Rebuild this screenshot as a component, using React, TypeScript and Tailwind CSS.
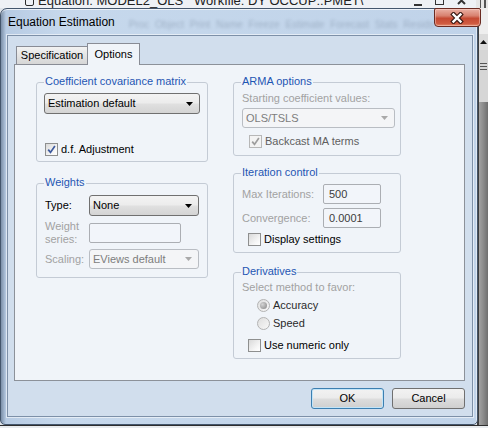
import React from 'react';

type Kids = { children?: React.ReactNode; className?: string };

// Small black/grey drop-down arrow used by the combo boxes
function Arrow({ disabled }: { disabled?: boolean }) {
  return (
    <svg width="7" height="4" viewBox="0 0 7 4" className="ml-auto mr-[6px] shrink-0">
      <path d="M0 0h7L3.5 4z" fill={disabled ? '#a9a9a9' : '#000'} />
    </svg>
  );
}

function Combo({ value, disabled, className = '' }: { value: string; disabled?: boolean; className?: string }) {
  return (
    <div
      className={`flex items-center rounded-[3px] border pl-[3px] ${
        disabled
          ? 'border-[#b9bdc3] bg-[#f4f5f7] text-[#7d7d7d]'
          : 'border-[#707070] bg-[linear-gradient(#f3f3f3,#ececec_48%,#e0e0e0_52%,#d4d4d4)] text-black'
      } ${className}`}
    >
      <span>{value}</span>
      <Arrow disabled={disabled} />
    </div>
  );
}

function Field({ value = '', className = '' }: { value?: string; className?: string }) {
  return (
    <div className={`flex h-[20px] items-center rounded-[2px] border border-[#abaeb3] bg-[#f2f5fa] pl-[5px] text-[#3c3c3c] ${className}`}>
      {value}
    </div>
  );
}

function Check({ label, checked, disabled }: { label: string; checked?: boolean; disabled?: boolean }) {
  return (
    <div className="flex h-[13px] items-center gap-[3px]">
      <span
        className={`flex h-[13px] w-[13px] shrink-0 items-center justify-center border ${
          disabled
            ? 'border-[#b7b7b7] bg-[#f3f3f3]'
            : 'border-[#8e8f8f] bg-[linear-gradient(135deg,#d9d9d9,#f7f7f7_70%,#ffffff)]'
        }`}
      >
        {checked && (
          <svg width="9" height="9" viewBox="0 0 9 9">
            <path
              d="M1.2 4.6l2.3 2.8L7.9 1"
              fill="none"
              stroke={disabled ? '#9d9d9d' : '#3d5a9e'}
              strokeWidth="1.7"
            />
          </svg>
        )}
      </span>
      <span className={disabled ? 'text-[#5f5f5f]' : 'text-black'}>{label}</span>
    </div>
  );
}

function Radio({ label, checked }: { label: string; checked?: boolean }) {
  return (
    <div className="flex h-[13px] items-center gap-[3px]">
      <span className="flex h-[13px] w-[13px] shrink-0 items-center justify-center rounded-full border border-[#b3b3b3] bg-[linear-gradient(135deg,#dedede,#f8f8f8)]">
        {checked && (
          <span className="h-[7px] w-[7px] rounded-full bg-[radial-gradient(circle_at_35%_35%,#d4d4d4,#858585)]" />
        )}
      </span>
      <span className="text-[#2a2a2a]">{label}</span>
    </div>
  );
}

function Group({ title, className = '', children }: Kids & { title: string }) {
  return (
    <div className={`relative rounded-[3px] border border-[#c4cbd5] ${className}`}>
      <span className="absolute -top-[8px] left-[7px] bg-[#f0f4f9] px-[1px] text-[#1f56b3]">{title}</span>
      {children}
    </div>
  );
}

function Label({ children, className = '' }: Kids) {
  return <span className={`text-[#a2a2a2] ${className}`}>{children}</span>;
}

function Button({ children, focused }: Kids & { focused?: boolean }) {
  return (
    <button
      className={`h-[21px] w-[73px] rounded-[3px] border bg-[linear-gradient(#f2f2f2,#ebebeb_48%,#dddddd_52%,#cfcfcf)] text-black ${
        focused ? 'border-[#3c7fb1] shadow-[inset_0_0_0_1px_#c2e4f8]' : 'border-[#707070]'
      }`}
    >
      {children}
    </button>
  );
}

// Window sitting behind the dialog: just its title strip and scrollbar show
function BackWindow() {
  return (
    <div className="flex h-full flex-col">
      <div className="flex h-[8px] items-start overflow-hidden bg-[#eef1f5]">
        <span className="-mt-[5px] ml-[25px] h-[11px] w-[9px] shrink-0 rounded-[2px] border-[1.5px] border-[#2b2b2b]" />
        <span className="-mt-[6px] ml-[4px] whitespace-pre text-[13px] leading-[14px] text-[#222]">
          {'Equation: MODEL2_OLS   Workfile: DY OCCUP::PMET\\'}
        </span>
        <span className="-mt-[4px] ml-auto mr-[10px] flex gap-[13px] text-[#333]">
          <span className="mt-[8px] h-[2px] w-[8px] bg-[#333]" />
          <span className="h-[9px] w-[9px] border border-[#333]" />
          <svg width="9" height="9" viewBox="0 0 9 9">
            <path d="M1 1l7 7M8 1L1 8" stroke="#333" strokeWidth="2" />
          </svg>
        </span>
        <span className="h-full w-[12px] shrink-0 bg-[linear-gradient(to_right,#e6e6e6_30%,#555_30%,#555_45%,#e6e6e6_45%,#e6e6e6_70%,#555_70%,#555_85%,#e6e6e6_85%)]" />
      </div>
      <div className="flex flex-1">
        <div className="flex-1 bg-[#dfe4ea]" />
        <div className="flex w-[11px] flex-col border-l-[2px] border-[#3f3f3f]">
          <div className="h-[26px] bg-[#eeeeee]" />
          <div className="flex h-[16px] items-center justify-center bg-[#dcdcdc]">
            <svg width="7" height="4" viewBox="0 0 7 4">
              <path d="M3.5 0L7 4H0z" fill="#111" />
            </svg>
          </div>
          <div className="flex h-[52px] items-start justify-center bg-[#d6d6d6] pt-[13px]">
            <span className="flex flex-col gap-[2px]">
              <span className="h-px w-[7px] bg-[#555]" />
              <span className="h-px w-[7px] bg-[#555]" />
              <span className="h-px w-[7px] bg-[#555]" />
            </span>
          </div>
          <div className="flex-1 bg-[linear-gradient(to_right,#a2a2a2,#8a8a8a_50%,#6f6f6f)]" />
        </div>
      </div>
      <div className="h-[3px] border-t border-[#2e2e2e] bg-[#e9ecef]" />
    </div>
  );
}

function CloseButton() {
  return (
    <div className="-mt-px mr-[4px] flex h-[19px] w-[47px] shrink-0 items-center justify-center rounded-b-[4px] rounded-t-[2px] border border-[#6a2b22] bg-[linear-gradient(#eab0a4,#d8816f_40%,#c54a33_55%,#cf5a40_85%,#e28a6c)] shadow-[inset_0_0_0_1px_rgba(255,220,210,0.45)]">
      <svg width="14" height="12" viewBox="0 0 14 12">
        <path d="M3.5 2.5l7 7M10.5 2.5l-7 7" stroke="#3b1a14" strokeWidth="4.6" strokeLinecap="square" />
        <path d="M3.5 2.5l7 7M10.5 2.5l-7 7" stroke="#ffffff" strokeWidth="2.4" strokeLinecap="square" />
      </svg>
    </div>
  );
}

function OptionsPage() {
  return (
    <div className="flex h-[317px] w-[451px] gap-[25px] border border-[#8c9199] bg-[#f0f4f9] pl-[21px] pt-[17px]">
      {/* left column */}
      <div className="flex w-[172px] flex-col">
        <Group title="Coefficient covariance matrix" className="h-[80px] px-[7px] pt-[10px]">
          <Combo value="Estimation default" className="h-[21px] w-full" />
          <div className="ml-px mt-[29px]">
            <Check label="d.f. Adjustment" checked />
          </div>
        </Group>

        <Group title="Weights" className="mt-[21px] h-[95px] pl-[8px] pt-[11px]">
          <div className="flex h-[21px] items-center">
            <span className="w-[44px] text-black">Type:</span>
            <Combo value="None" className="h-[21px] w-[110px]" />
          </div>
          <div className="mt-[7px] flex h-[20px] items-center">
            <Label className="flex w-[44px] flex-col">
              <span>Weight</span>
              <span>series:</span>
            </Label>
            <Field className="w-[92px]" />
          </div>
          <div className="mt-[6px] flex h-[20px] items-center">
            <Label className="w-[44px]">Scaling:</Label>
            <Combo value="EViews default" disabled className="h-[20px] w-[110px]" />
          </div>
        </Group>
      </div>

      {/* right column */}
      <div className="flex w-[168px] flex-col">
        <Group title="ARMA options" className="h-[74px] pl-[8px] pt-[9px]">
          <Label className="block">Starting coefficient values:</Label>
          <Combo value="OLS/TSLS" disabled className="mt-[3px] h-[20px] w-[153px]" />
          <div className="ml-[7px] mt-[7px]">
            <Check label="Backcast MA terms" checked disabled />
          </div>
        </Group>

        <Group title="Iteration control" className="mt-[17px] h-[80px] pl-[8px] pt-[10px]">
          <div className="flex h-[20px] items-center">
            <Label className="w-[81px]">Max Iterations:</Label>
            <Field value="500" className="w-[58px]" />
          </div>
          <div className="mt-[4px] flex h-[20px] items-center">
            <Label className="w-[81px]">Convergence:</Label>
            <Field value="0.0001" className="w-[58px]" />
          </div>
          <div className="ml-[6px] mt-[5px]">
            <Check label="Display settings" />
          </div>
        </Group>

        <Group title="Derivatives" className="mt-[19px] h-[87px] pl-[8px] pt-[8px]">
          <Label className="block">Select method to favor:</Label>
          <div className="ml-[15px] mt-[5px] flex flex-col gap-[5px]">
            <Radio label="Accuracy" checked />
            <Radio label="Speed" />
          </div>
          <div className="ml-[6px] mt-[9px]">
            <Check label="Use numeric only" />
          </div>
        </Group>
      </div>
    </div>
  );
}

export default function App() {
  return (
    <div className="relative h-[428px] w-[488px] overflow-hidden font-['Liberation_Sans',Arial,sans-serif] text-[11px] leading-[13px] text-black">
      <BackWindow />

      {/* Equation Estimation dialog */}
      <div className="absolute left-0 top-[8px] flex h-[417px] w-[478px] flex-col rounded-b-[5px] rounded-t-[7px] border border-[#44566c] bg-[linear-gradient(to_right,#7b8fa8,#b7cbe3_5px,#c6d8ec_60px,#c0d3e9)] shadow-[inset_0_1px_0_rgba(255,255,255,0.7),inset_-1px_0_0_rgba(255,255,255,0.5)]">
        <div className="flex h-[26px] items-start">
          <span className="ml-[7px] mt-[6px] shrink-0 whitespace-nowrap text-[12px] leading-[14px] text-black">
            Equation Estimation
          </span>
          {/* toolbar of the window behind, seen through the glass */}
          <span className="ml-[14px] mt-[9px] whitespace-nowrap text-[10px] text-[#4a5b72] opacity-30 blur-[1.4px] [word-spacing:3px]">
            Proc Object Print Name Freeze Estimate Forecast Stats Resids
          </span>
          <span className="ml-auto" />
          <CloseButton />
        </div>

        <div className="ml-[6px] flex h-[382px] w-[466px] flex-col border border-[#7d90a8] bg-[#d1deed] shadow-[0_0_0_1px_rgba(255,255,255,0.55)]">
          <div className="relative z-10 -mb-px flex items-end pl-[8px] pt-[7px]">
            <div className="flex h-[19px] w-[72px] items-center justify-center border border-[#898c95] bg-[linear-gradient(#f2f2f2,#e4e4e4_50%,#d6d6d6)] text-black">
              Specification
            </div>
            <div className="-ml-px flex h-[22px] w-[53px] items-center justify-center border border-b-0 border-[#898c95] bg-[#f0f4f9] pb-[1px] text-black">
              Options
            </div>
          </div>
          <div className="ml-[6px]">
            <OptionsPage />
          </div>
          <div className="mt-[7px] flex justify-end gap-[8px] pr-[7px]">
            <Button focused>OK</Button>
            <Button>Cancel</Button>
          </div>
        </div>
      </div>
    </div>
  );
}
